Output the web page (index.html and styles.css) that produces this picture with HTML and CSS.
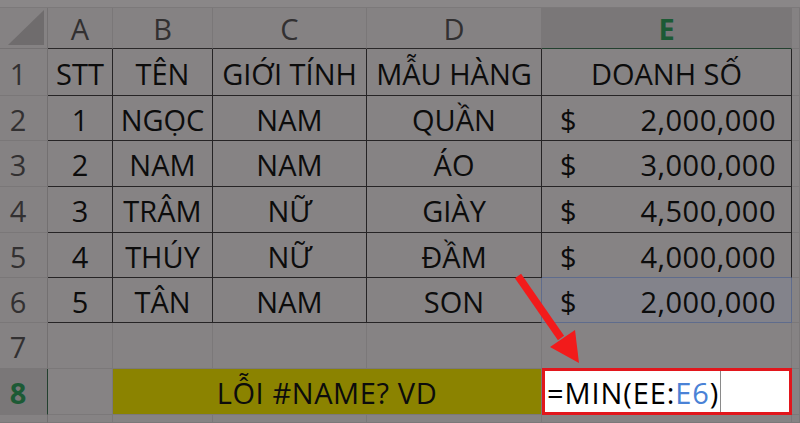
FILE: index.html
```html
<!DOCTYPE html>
<html lang="vi">
<head>
<meta charset="utf-8">
<link rel="stylesheet" href="styles.css">
</head>
<body>
<div class="sheet">
  <!-- top strip -->
  <div class="strip"></div><div class="strip"></div><div class="strip"></div><div class="strip"></div><div class="strip"></div><div class="strip"></div><div class="strip"></div>

  <!-- column headers -->
  <div class="corner"><span class="tri"></span></div>
  <div class="ch top-dark">A</div>
  <div class="ch top-dark">B</div>
  <div class="ch top-dark">C</div>
  <div class="ch top-dark">D</div>
  <div class="ch sel">E</div>
  <div class="ch"></div>

  <!-- row 1 -->
  <div class="rh">1</div>
  <div class="c t">STT</div>
  <div class="c t">TÊN</div>
  <div class="c t">GIỚI TÍNH</div>
  <div class="c t">MẪU HÀNG</div>
  <div class="c t">DOANH SỐ</div>
  <div class="c g"></div>

  <!-- row 2 -->
  <div class="rh">2</div>
  <div class="c t">1</div>
  <div class="c t">NGỌC</div>
  <div class="c t">NAM</div>
  <div class="c t">QUẦN</div>
  <div class="c t money"><span>$</span><span class="num">2,000,000</span></div>
  <div class="c g"></div>

  <!-- row 3 -->
  <div class="rh">3</div>
  <div class="c t">2</div>
  <div class="c t">NAM</div>
  <div class="c t">NAM</div>
  <div class="c t">ÁO</div>
  <div class="c t money"><span>$</span><span class="num">3,000,000</span></div>
  <div class="c g"></div>

  <!-- row 4 -->
  <div class="rh">4</div>
  <div class="c t">3</div>
  <div class="c t">TRÂM</div>
  <div class="c t">NỮ</div>
  <div class="c t">GIÀY</div>
  <div class="c t money"><span>$</span><span class="num">4,500,000</span></div>
  <div class="c g"></div>

  <!-- row 5 -->
  <div class="rh">5</div>
  <div class="c t">4</div>
  <div class="c t">THÚY</div>
  <div class="c t">NỮ</div>
  <div class="c t">ĐẦM</div>
  <div class="c t money blue-bottom"><span>$</span><span class="num">4,000,000</span></div>
  <div class="c g"></div>

  <!-- row 6 -->
  <div class="rh">6</div>
  <div class="c t">5</div>
  <div class="c t">TÂN</div>
  <div class="c t">NAM</div>
  <div class="c t blue-right">SON</div>
  <div class="c t money ref"><span>$</span><span class="num">2,000,000</span></div>
  <div class="c g"></div>

  <!-- row 7 -->
  <div class="rh">7</div>
  <div class="c g"></div>
  <div class="c g"></div>
  <div class="c g"></div>
  <div class="c g"></div>
  <div class="c g"></div>
  <div class="c g"></div>

  <!-- row 8 -->
  <div class="rh sel">8</div>
  <div class="c g"></div>
  <div class="c yellow">LỖI #NAME? VD</div>
  <div class="c edit"><span>=MIN(EE:</span><span class="ref-txt">E6</span><span>)</span><span class="caret"></span></div>
  <div class="c g"></div>

  <!-- bottom strip -->
  <div class="rh"></div><div class="c g"></div><div class="c g"></div><div class="c g"></div><div class="c g"></div><div class="c g"></div><div class="c g"></div>

  <svg class="arrow" width="800" height="423" viewBox="0 0 800 423">
    <line x1="518" y1="276" x2="561" y2="338" stroke="#f21b1b" stroke-width="7.5" stroke-linecap="butt"/>
    <polygon points="579,363 550,347 575,330" fill="#f21b1b"/>
  </svg>
</div>
</body>
</html>
```

FILE: styles.css
```css
* { box-sizing: border-box; }
html, body { margin: 0; padding: 0; }
body {
  width: 800px;
  height: 423px;
  overflow: hidden;
  background: #868384;
  font-family: "Open Sans", "Liberation Sans", sans-serif;
}
.sheet {
  position: relative;
  display: grid;
  grid-template-columns: 48px 65px 100px 154px 175px 250px 8px;
  grid-template-rows: 8px 41px 47px 45px 46px 46px 45px 45px 46px 46px 8px;
  width: 800px;
  height: 423px;
  background: #868384;
  color: #0c0c0c;
  font-size: 29px;
}
.strip {
  background: #8a8788;
  border-bottom: 1px solid #7c797a;
}
.corner {
  position: relative;
  background: #858283;
  border-right: 1px solid #757273;
  border-bottom: 1px solid #757273;
}
.tri {
  position: absolute;
  right: 3px;
  bottom: 3px;
  width: 0;
  height: 0;
  border-left: 36px solid transparent;
  border-bottom: 35px solid #6f6c6d;
}
.ch {
  display: flex;
  align-items: center;
  justify-content: center;
  padding-top: 1px;
  background: #858283;
  color: #323031;
  border-right: 1px solid #7a7778;
  border-bottom: 1px solid #7a7778;
  font-size: 29px;
}
.ch.top-dark { border-bottom-color: #2a2829; }
.ch.sel {
  background: #7a7778;
  color: #1c5a35;
  font-weight: 700;
  border-bottom: 1px solid #23402f;
}
.rh {
  display: flex;
  align-items: center;
  justify-content: center;
  padding: 2px 11px 0 0;
  background: #858283;
  color: #323031;
  border-right: 1px solid #737071;
  border-bottom: 1px solid #7a7778;
  font-size: 29px;
}
.rh.sel {
  background: #7a7778;
  color: #1c5a35;
  font-weight: 700;
  border-right: 1px solid #23402f;
}
.c {
  display: flex;
  align-items: center;
  justify-content: center;
  padding-top: 2px;
  white-space: nowrap;
  border-right: 1px solid #7b7879;
  border-bottom: 1px solid #7b7879;
}
.c.t {
  border-right-color: #262425;
  border-bottom-color: #262425;
}
.money {
  justify-content: space-between;
  padding: 2px 15px 0 18px;
}
.num { letter-spacing: 0.5px; }
.blue-bottom { border-bottom-color: #5f6c8c !important; }
.blue-right { border-right-color: #5f6c8c !important; }
.ref {
  background: #83838b;
  border-right-color: #5f6c8c !important;
  border-bottom-color: #5f6c8c !important;
}
.yellow {
  grid-column: span 3;
  background: #8b8300;
  color: #0c0c0c;
  letter-spacing: 0.6px;
  border-right-color: #7b7879;
}
.edit {
  justify-content: flex-start;
  background: #ffffff;
  border: 3px solid #e2161c;
  padding: 2px 0 0 2px;
  margin: -1px 0 0 0;
  color: #000;
  letter-spacing: 0.9px;
}
.ref-txt { color: #4a82d6; }
.caret {
  align-self: stretch;
  width: 1px;
  margin: -2px 0 0 1px;
  background: #8a8a8a;
}
.arrow {
  position: absolute;
  left: 0;
  top: 0;
  pointer-events: none;
}
```
